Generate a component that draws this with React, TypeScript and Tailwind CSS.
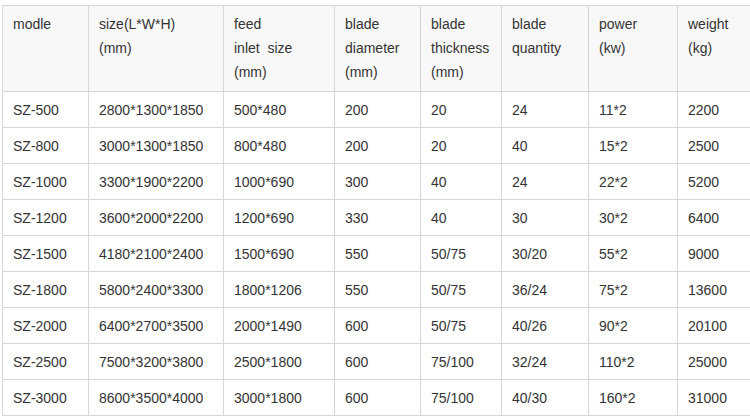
import React from "react";

const HEAD = [
  ["modle"],
  ["size(L*W*H)", "(mm)"],
  ["feed", "inlet  size", "(mm)"],
  ["blade", "diameter", "(mm)"],
  ["blade", "thickness", "(mm)"],
  ["blade", "quantity"],
  ["power", "(kw)"],
  ["weight", "(kg)"],
];

const WIDTHS = [86, 135, 111, 86, 81, 87, 89, 90];

const ROWS = [
  ["SZ-500", "2800*1300*1850", "500*480", "200", "20", "24", "11*2", "2200"],
  ["SZ-800", "3000*1300*1850", "800*480", "200", "20", "40", "15*2", "2500"],
  ["SZ-1000", "3300*1900*2200", "1000*690", "300", "40", "24", "22*2", "5200"],
  ["SZ-1200", "3600*2000*2200", "1200*690", "330", "40", "30", "30*2", "6400"],
  ["SZ-1500", "4180*2100*2400", "1500*690", "550", "50/75", "30/20", "55*2", "9000"],
  ["SZ-1800", "5800*2400*3300", "1800*1206", "550", "50/75", "36/24", "75*2", "13600"],
  ["SZ-2000", "6400*2700*3500", "2000*1490", "600", "50/75", "40/26", "90*2", "20100"],
  ["SZ-2500", "7500*3200*3800", "2500*1800", "600", "75/100", "32/24", "110*2", "25000"],
  ["SZ-3000", "8600*3500*4000", "3000*1800", "600", "75/100", "40/30", "160*2", "31000"],
];

export default function App() {
  return (
    <div className="w-[750px] h-[420px] overflow-hidden bg-white pt-[5px] pl-[2px] font-['Liberation_Sans',Arial,sans-serif] text-[14px] text-[#333]">
      <table className="border-collapse table-fixed w-[766px]">
        <colgroup>
          {WIDTHS.map((w, i) => (
            <col key={i} style={{ width: w }} />
          ))}
        </colgroup>
        <thead>
          <tr className="bg-[#f8f8f8] h-[86px]">
            {HEAD.map((lines, i) => (
              <th
                key={i}
                className="border border-[#d6d6d6] align-top text-left font-normal px-[10px] pt-[6px] pb-[6px] leading-[24px] whitespace-pre"
              >
                {lines.map((l, j) => (
                  <div key={j}>{l}</div>
                ))}
              </th>
            ))}
          </tr>
        </thead>
        <tbody>
          {ROWS.map((row, r) => (
            <tr key={r} className="h-[36px]">
              {row.map((cell, c) => (
                <td key={c} className="border border-[#d6d6d6] px-[10px] leading-[24px] align-middle">
                  {cell}
                </td>
              ))}
            </tr>
          ))}
        </tbody>
      </table>
    </div>
  );
}
